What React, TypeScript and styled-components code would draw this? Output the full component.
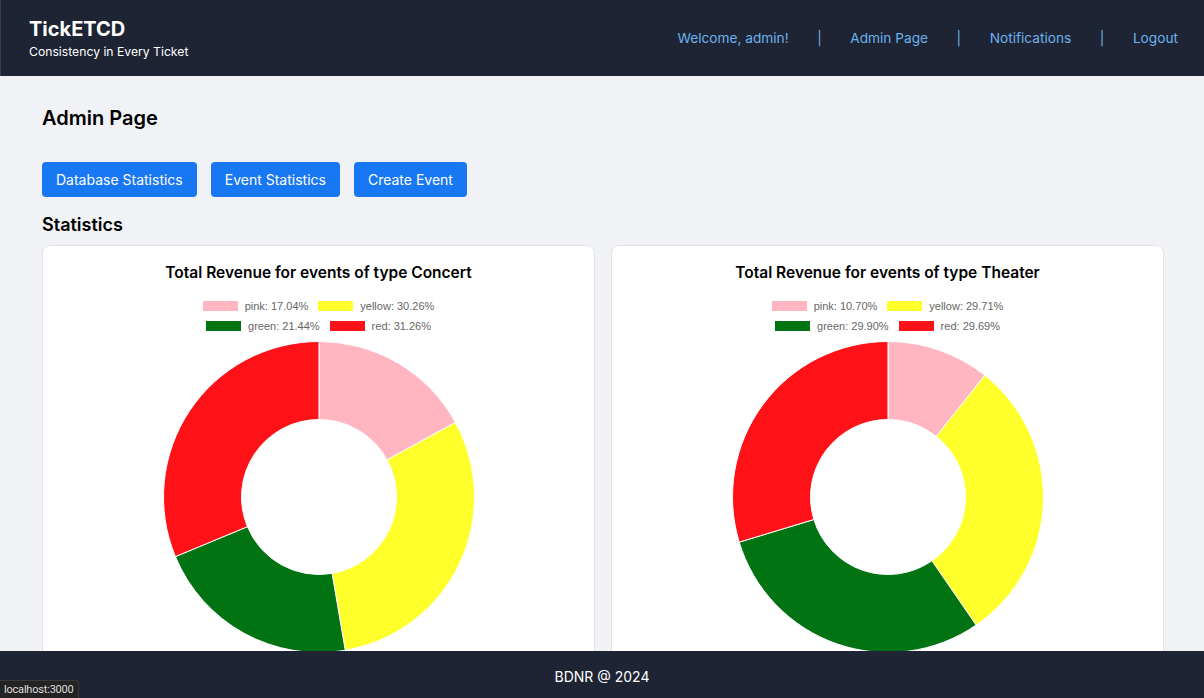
import React from 'react';
import styled, { createGlobalStyle } from 'styled-components';

const GlobalStyle = createGlobalStyle`
  html, body {
    margin: 0;
    padding: 0;
    height: 100%;
    overflow: hidden;
  }
  body {
    font-family: Inter, "Noto Sans", "Liberation Sans", sans-serif;
    background-color: #f0f2f5;
    color: #000;
  }
  * {
    box-sizing: border-box;
  }
`;

const Page = styled.div`
  display: flex;
  flex-direction: column;
  height: 100vh;
  position: relative;
`;

const Header = styled.header`
  display: flex;
  align-items: center;
  justify-content: space-between;
  height: 76px;
  flex-shrink: 0;
  padding: 0 26px 0 28px;
  background-color: #1e2433;
  border-left: 1px solid #3b404a;
`;

const Brand = styled.div`
  display: flex;
  flex-direction: column;
  gap: 3px;
`;

const Logo = styled.div`
  font-size: 20px;
  font-weight: 700;
  color: #fff;
  line-height: 24px;
`;

const Tagline = styled.div`
  font-size: 12.2px;
  color: #fff;
  line-height: 16px;
`;

const Nav = styled.nav`
  display: flex;
  align-items: center;
  gap: 28.5px;
`;

const NavLink = styled.a`
  font-size: 13.7px;
  color: #6cb2ee;
  text-decoration: none;
`;

const Sep = styled.span`
  font-size: 13.7px;
  color: #6cb2ee;
`;

const Main = styled.main`
  flex: 1;
  overflow: hidden;
  padding: 28px 40px 0 42px;
`;

const PageTitle = styled.h1`
  margin: 0;
  font-size: 20px;
  font-weight: 600;
  line-height: 28px;
`;

const ButtonRow = styled.div`
  display: flex;
  gap: 14px;
  margin-top: 30px;
`;

const Button = styled.button`
  height: 35px;
  padding: 0 14px;
  border: none;
  border-radius: 4px;
  background-color: #1877f2;
  color: #fff;
  font-family: inherit;
  font-size: 14px;
  cursor: pointer;
`;

const SectionTitle = styled.h2`
  margin: 16px 0 0;
  font-size: 18px;
  font-weight: 600;
  line-height: 24px;
`;

const Grid = styled.div`
  display: grid;
  grid-template-columns: 1fr 1fr;
  gap: 16px;
  margin-top: 8px;
`;

const Card = styled.div`
  display: flex;
  flex-direction: column;
  align-items: center;
  height: 520px;
  padding-top: 15px;
  background-color: #fff;
  border: 1px solid #e2e4e8;
  border-radius: 8px;
`;

const CardTitle = styled.h3`
  margin: 0;
  font-size: 15.5px;
  font-weight: 600;
  line-height: 24px;
`;

const Legend = styled.div`
  display: flex;
  flex-direction: column;
  align-items: center;
  margin-top: 11px;
`;

const LegendRow = styled.div`
  display: flex;
  align-items: center;
  gap: 10px;
  height: 20px;
`;

const LegendItem = styled.div`
  display: flex;
  align-items: center;
  gap: 7px;
  font-family: "Liberation Sans", Arial, sans-serif;
  font-size: 11px;
  color: #666;
`;

const Swatch = styled.span<{ $color: string }>`
  display: inline-block;
  width: 35px;
  height: 10px;
  background-color: ${(p) => p.$color};
`;

const ChartBox = styled.div`
  margin-top: 5px;
`;

const Footer = styled.footer`
  display: flex;
  align-items: center;
  justify-content: center;
  height: 47px;
  padding-top: 3px;
  flex-shrink: 0;
  background-color: #1e2433;
  color: #fff;
  font-size: 14px;
`;

const StatusBar = styled.div`
  position: absolute;
  left: 0;
  bottom: 0;
  height: 18px;
  padding: 0 4px;
  display: flex;
  align-items: center;
  background-color: #232323;
  border: 1px solid #3a3a3a;
  border-left: none;
  border-bottom: none;
  border-top-right-radius: 4px;
  color: #ddd;
  font-family: Roboto, "Liberation Sans", sans-serif;
  font-size: 11px;
  letter-spacing: -0.2px;
`;

const COLORS: Record<string, string> = {
  pink: '#ffb6c1',
  yellow: '#ffff2b',
  green: '#027312',
  red: '#ff1118',
};

type Slice = { label: string; value: number };

const charts: { type: string; data: Slice[] }[] = [
  {
    type: 'Concert',
    data: [
      { label: 'pink', value: 17.04 },
      { label: 'yellow', value: 30.26 },
      { label: 'green', value: 21.44 },
      { label: 'red', value: 31.26 },
    ],
  },
  {
    type: 'Theater',
    data: [
      { label: 'pink', value: 10.7 },
      { label: 'yellow', value: 29.71 },
      { label: 'green', value: 29.9 },
      { label: 'red', value: 29.69 },
    ],
  },
];

const Donut: React.FC<{ data: Slice[] }> = ({ data }) => {
  const size = 312;
  const c = size / 2;
  const ro = 155.5;
  const ri = 77.5;
  const total = data.reduce((s, d) => s + d.value, 0);
  let start = -Math.PI / 2;

  const pt = (r: number, a: number) => `${c + r * Math.cos(a)} ${c + r * Math.sin(a)}`;

  return (
    <svg width={size} height={size} viewBox={`0 0 ${size} ${size}`}>
      {data.map((d) => {
        const sweep = (d.value / total) * Math.PI * 2;
        const end = start + sweep;
        const large = sweep > Math.PI ? 1 : 0;
        const path = [
          `M ${pt(ro, start)}`,
          `A ${ro} ${ro} 0 ${large} 1 ${pt(ro, end)}`,
          `L ${pt(ri, end)}`,
          `A ${ri} ${ri} 0 ${large} 0 ${pt(ri, start)}`,
          'Z',
        ].join(' ');
        start = end;
        return <path key={d.label} d={path} fill={COLORS[d.label]} stroke="#fff" strokeWidth={1} />;
      })}
    </svg>
  );
};

const fmt = (v: number) => `${v.toFixed(2)}%`;

const App: React.FC = () => {
  return (
    <Page>
      <GlobalStyle />
      <Header>
        <Brand>
          <Logo>TickETCD</Logo>
          <Tagline>Consistency in Every Ticket</Tagline>
        </Brand>
        <Nav>
          <NavLink href="#">Welcome, admin!</NavLink>
          <Sep>|</Sep>
          <NavLink href="#">Admin Page</NavLink>
          <Sep>|</Sep>
          <NavLink href="#">Notifications</NavLink>
          <Sep>|</Sep>
          <NavLink href="#">Logout</NavLink>
        </Nav>
      </Header>

      <Main>
        <PageTitle>Admin Page</PageTitle>
        <ButtonRow>
          <Button>Database Statistics</Button>
          <Button>Event Statistics</Button>
          <Button>Create Event</Button>
        </ButtonRow>
        <SectionTitle>Statistics</SectionTitle>
        <Grid>
          {charts.map((chart) => (
            <Card key={chart.type}>
              <CardTitle>Total Revenue for events of type {chart.type}</CardTitle>
              <Legend>
                {[chart.data.slice(0, 2), chart.data.slice(2)].map((row, i) => (
                  <LegendRow key={i}>
                    {row.map((d) => (
                      <LegendItem key={d.label}>
                        <Swatch $color={COLORS[d.label]} />
                        {d.label}: {fmt(d.value)}
                      </LegendItem>
                    ))}
                  </LegendRow>
                ))}
              </Legend>
              <ChartBox>
                <Donut data={chart.data} />
              </ChartBox>
            </Card>
          ))}
        </Grid>
      </Main>

      <Footer>BDNR @ 2024</Footer>
      <StatusBar>localhost:3000</StatusBar>
    </Page>
  );
};

export default App;
